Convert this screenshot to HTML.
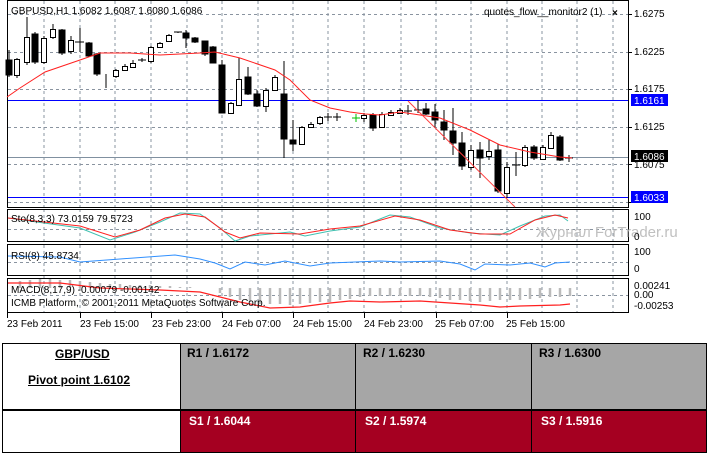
<!DOCTYPE html>
<html><head><meta charset="utf-8"><style>
body{margin:0;width:708px;height:455px;background:#fff;overflow:hidden;font-family:"Liberation Sans",sans-serif;}
svg text{font-family:"Liberation Sans",sans-serif;font-size:10px;fill:#000}
.t{position:absolute;font:bold 12px "Liberation Sans",sans-serif;}
</style></head><body>
<svg width="708" height="340" style="position:absolute;left:0;top:0">
<g stroke="#8a94a0" stroke-dasharray="3,3" stroke-width="1">
<path d="M44 1V207M80 1V207M115 1V207M151 1V207M187 1V207M222 1V207M258 1V207M293 1V207M328 1V207M364 1V207M401 1V207M436 1V207M471 1V207M507 1V207M542 1V207M577 1V207M613 1V207"/>
<path d="M8 14.5H628M8 52.5H628M8 89.5H628M8 127.5H628M8 164.5H628M8 202.5H628"/>
<path d="M44 209V312M80 209V312M115 209V312M151 209V312M187 209V312M222 209V312M258 209V312M293 209V312M328 209V312M364 209V312M401 209V312M436 209V312M471 209V312M507 209V312M542 209V312M577 209V312M613 209V312"/>
<path d="M8 229.5H628M8 262.5H628M8 295.5H628"/>
</g>
<rect x="7.5" y="0.5" width="621" height="207" fill="none" stroke="#000"/>
<rect x="7.5" y="209.5" width="621" height="32" fill="none" stroke="#000"/>
<rect x="7.5" y="244.5" width="621" height="31" fill="none" stroke="#000"/>
<rect x="7.5" y="278.5" width="621" height="34" fill="none" stroke="#000"/>
<path d="M8 100.5H628M8 197.5H628" stroke="#0000ff"/>
<path d="M8 157.5H628" stroke="#8090a0"/>
<g stroke="#000" stroke-width="1">
<path d="M9 50V77M17 58V78M27 17V65M35 32V64M44 36V64M53 24V39M62 29V55M71 36V54M80 28V52M89 42V57M97 53V76M106 74V88M116 69V78M125 64V71M133 60V68M142 58V62M151 46V63M160 42V48M169 34V42M178 32V33M186 30V48M195 37V43M205 41V56M213 46V63M222 60V113M231 102V114M239 58V106M248 67V95M257 90V107M266 88V112M275 75V91M284 61V158M293 120V151M302 126V145M311 122V128M320 116V125M328 113V121M337 113V121M364 113V122M373 113V131M382 112V128M391 110V116M400 108V114M408 105V115M418 100V113M426 103V115M435 104V128M444 110V140M453 108V155M462 132V170M471 145V170M480 142V178M489 140V160M498 144V193M507 162V198M516 152V176M525 145V167M534 145V160M543 145V160M551 132V149M560 135V161M569 155V162"/>
<g fill="#000">
<rect x="6" y="60" width="6" height="15"/><rect x="32" y="34" width="6" height="28"/><rect x="59" y="30" width="6" height="23"/><rect x="86" y="43" width="6" height="13"/><rect x="94" y="54" width="6" height="20"/><rect x="183" y="33" width="6" height="5"/><rect x="192" y="38" width="6" height="4"/><rect x="202" y="41" width="6" height="13"/><rect x="210" y="47" width="6" height="16"/><rect x="219" y="65" width="6" height="48"/><rect x="245" y="77" width="6" height="17"/><rect x="254" y="94" width="6" height="12"/><rect x="281" y="94" width="6" height="45"/><rect x="290" y="140" width="6" height="4"/><rect x="370" y="115" width="6" height="13"/><rect x="423" y="109" width="6" height="5"/><rect x="432" y="112" width="6" height="8"/><rect x="441" y="122" width="6" height="8"/><rect x="450" y="131" width="6" height="12"/><rect x="459" y="143" width="6" height="23"/><rect x="477" y="150" width="6" height="8"/><rect x="495" y="150" width="6" height="41"/><rect x="531" y="147" width="6" height="11"/><rect x="557" y="137" width="6" height="23"/>
</g>
<g fill="#fff">
<rect x="14.5" y="59.5" width="5" height="16"/><rect x="24.5" y="37.5" width="5" height="25"/><rect x="41.5" y="38.5" width="5" height="24"/><rect x="50.5" y="29.5" width="5" height="8"/><rect x="68.5" y="40.5" width="5" height="11"/><rect x="113.5" y="70.5" width="5" height="6"/><rect x="122.5" y="66.5" width="5" height="4"/><rect x="130.5" y="63.5" width="5" height="4"/><rect x="148.5" y="47.5" width="5" height="14"/><rect x="157.5" y="43.5" width="5" height="4"/><rect x="166.5" y="35.5" width="5" height="6"/><rect x="228.5" y="103.5" width="5" height="10"/><rect x="236.5" y="79.5" width="5" height="26"/><rect x="263.5" y="90.5" width="5" height="16"/><rect x="272.5" y="77.5" width="5" height="13"/><rect x="299.5" y="127.5" width="5" height="17"/><rect x="308.5" y="124.5" width="5" height="3"/><rect x="317.5" y="117.5" width="5" height="6"/><rect x="361.5" y="115.5" width="5" height="3"/><rect x="379.5" y="114.5" width="5" height="13"/><rect x="388.5" y="112.5" width="5" height="3"/><rect x="397.5" y="110.5" width="5" height="3"/><rect x="468.5" y="150.5" width="5" height="17"/><rect x="486.5" y="151.5" width="5" height="5"/><rect x="504.5" y="167.5" width="5" height="26"/><rect x="522.5" y="147.5" width="5" height="18"/><rect x="540.5" y="147.5" width="5" height="12"/><rect x="548.5" y="135.5" width="5" height="13"/>
</g>
<path d="M75 42H84M138 60H146M174 32H182M324 117H332M333 117H341M404 111H412M414 110H422M512 165H520M565 158H573"/>
</g>
<path d="M352 118H360M356 114V122" stroke="#00c000"/>
<polyline fill="none" stroke="#ff2020" points="7,97 20,88 45,72 80,60 100,53 130,53 160,55 200,53 215,52 240,58 275,70 290,80 310,100 330,108 350,112 365,114 380,115 400,112 420,115 440,118 470,130 500,145 530,152 560,157 572,158"/>
<path d="M408 101L515 207" stroke="#ff4040"/>
<polyline fill="none" stroke="#40c0b0" points="8,218 80,228 110,240 135,232 160,222 180,213 200,214 220,228 235,241 250,236 290,232 305,236 330,231 360,227 390,215 410,217 440,228 470,233 500,235 520,226 545,216 560,215 568,221"/>
<polyline fill="none" stroke="#ff2020" points="8,218 80,226 115,237 140,230 165,218 185,214 205,217 225,232 240,238 260,233 300,234 330,229 360,226 395,216 420,220 450,230 480,234 510,234 535,220 555,215 568,218"/>
<polyline fill="none" stroke="#3090ff" points="8,256 60,257 80,262 120,259 175,255 200,259 215,263 230,269 245,262 265,265 285,261 310,266 330,263 380,261 400,262 440,261 460,264 475,270 485,264 510,265 530,263 545,267 555,263 570,262"/>
<g stroke="#bbb" stroke-width="2.5"><path d="M20 281V288M30 280V288M40 279V288M50 279V288M60 280V288M70 280V288M80 281V288M90 282V288M100 283V288M110 284V288M120 284V288M130 285V288M140 285V288M150 285V288M160 286V288M170 286V288M180 287V288M190 287V288M220 288V293M230 288V297M240 288V300M250 288V302M260 288V304M270 288V304M280 288V304M290 288V305M300 288V304M310 288V303M320 288V302M330 288V302M340 288V300M350 288V299M360 288V297M370 288V296M380 288V296M390 288V296M400 288V296M410 288V296M420 288V296M430 288V297M440 288V298M450 288V300M460 288V300M470 288V301M480 288V302M490 288V301M500 288V300M510 288V300M520 288V300M530 288V299M540 288V298M550 288V297M560 288V297M570 288V296"/></g>
<polyline fill="none" stroke="#ff2020" stroke-width="1.2" points="8,283 60,283 100,288 160,290 200,292 240,302 270,308 300,307 330,303 350,301 380,302 420,301 450,303 480,305 500,307 520,306 560,305 570,304"/>
<text x="11" y="14">GBPUSD,H1  1.6082 1.6087 1.6080 1.6086</text>
<text x="484" y="15">quotes_flow__monitor2 (1)</text>
<text x="612" y="16" font-weight="bold">×</text>
<text x="11" y="222">Sto(8,3,3) 73.0159 79.5723</text>
<text x="11" y="259">RSI(8) 45.8734</text>
<text x="11" y="293">MACD(8,17,9) -0.00079 -0.00142</text>
<text x="11" y="306">ICMB Platform, © 2001-2011 MetaQuotes Software Corp.</text>
<text x="536" y="237" style="font-size:15px;fill:#c0c0c0">Журнал ForTrader.ru</text>
<g><text x="634" y="17">1.6275</text><text x="634" y="55">1.6225</text><text x="634" y="92">1.6175</text><text x="634" y="130">1.6125</text><text x="634" y="168">1.6075</text>
<path d="M628 14.5H632M628 52.5H632M628 89.5H632M628 127.5H632M628 164.5H632M628 202.5H632" stroke="#000"/>
<rect x="631" y="94" width="37" height="12" fill="#0000ff"/><text x="634" y="104" style="fill:#fff">1.6161</text>
<rect x="631" y="150" width="37" height="12" fill="#000"/><text x="634" y="160" style="fill:#fff">1.6086</text>
<rect x="631" y="191" width="37" height="12" fill="#0000ff"/><text x="634" y="201" style="fill:#fff">1.6033</text>
<text x="634" y="220">100</text><text x="634" y="240">0</text>
<text x="634" y="255">100</text><text x="634" y="272">0</text>
<text x="634" y="289">0.00241</text><text x="634" y="298">0.00</text><text x="634" y="309">-0.00253</text>
</g>
<g><text x="7" y="327">23 Feb 2011</text><text x="80" y="327">23 Feb 15:00</text><text x="152" y="327">23 Feb 23:00</text><text x="222" y="327">24 Feb 07:00</text><text x="293" y="327">24 Feb 15:00</text><text x="364" y="327">24 Feb 23:00</text><text x="435" y="327">25 Feb 07:00</text><text x="506" y="327">25 Feb 15:00</text>
<path d="M7.5 313V318M80.5 313V318M151.5 313V318M222.5 313V318M293.5 313V318M364.5 313V318M436.5 313V318M507.5 313V318" stroke="#000"/></g>
</svg>
<div style="position:absolute;left:2px;top:343px;width:703px;height:108px;border:1px solid #000">
<div style="position:absolute;left:177px;top:0;width:525px;height:65px;background:#a6a6a6;border-left:1px solid #000"></div>
<div style="position:absolute;left:177px;top:67px;width:525px;height:41px;background:#a50021;border-left:1px solid #000"></div>
<div style="position:absolute;left:0;top:65px;width:703px;height:2px;background:#000"></div>
<div style="position:absolute;left:352px;top:0;width:1px;height:108px;background:#000"></div>
<div style="position:absolute;left:528px;top:0;width:1px;height:108px;background:#000"></div>
</div>
<div class="t" style="left:55px;top:347px;text-decoration:underline">GBP/USD</div>
<div class="t" style="left:28px;top:373px;text-decoration:underline">Pivot point 1.6102</div>
<div class="t" style="left:187px;top:346px">R1 / 1.6172</div>
<div class="t" style="left:363px;top:346px">R2 / 1.6230</div>
<div class="t" style="left:539px;top:346px">R3 / 1.6300</div>
<div class="t" style="left:189px;top:414px;color:#fff">S1 / 1.6044</div>
<div class="t" style="left:365px;top:414px;color:#fff">S2 / 1.5974</div>
<div class="t" style="left:541px;top:414px;color:#fff">S3 / 1.5916</div>
</body></html>
